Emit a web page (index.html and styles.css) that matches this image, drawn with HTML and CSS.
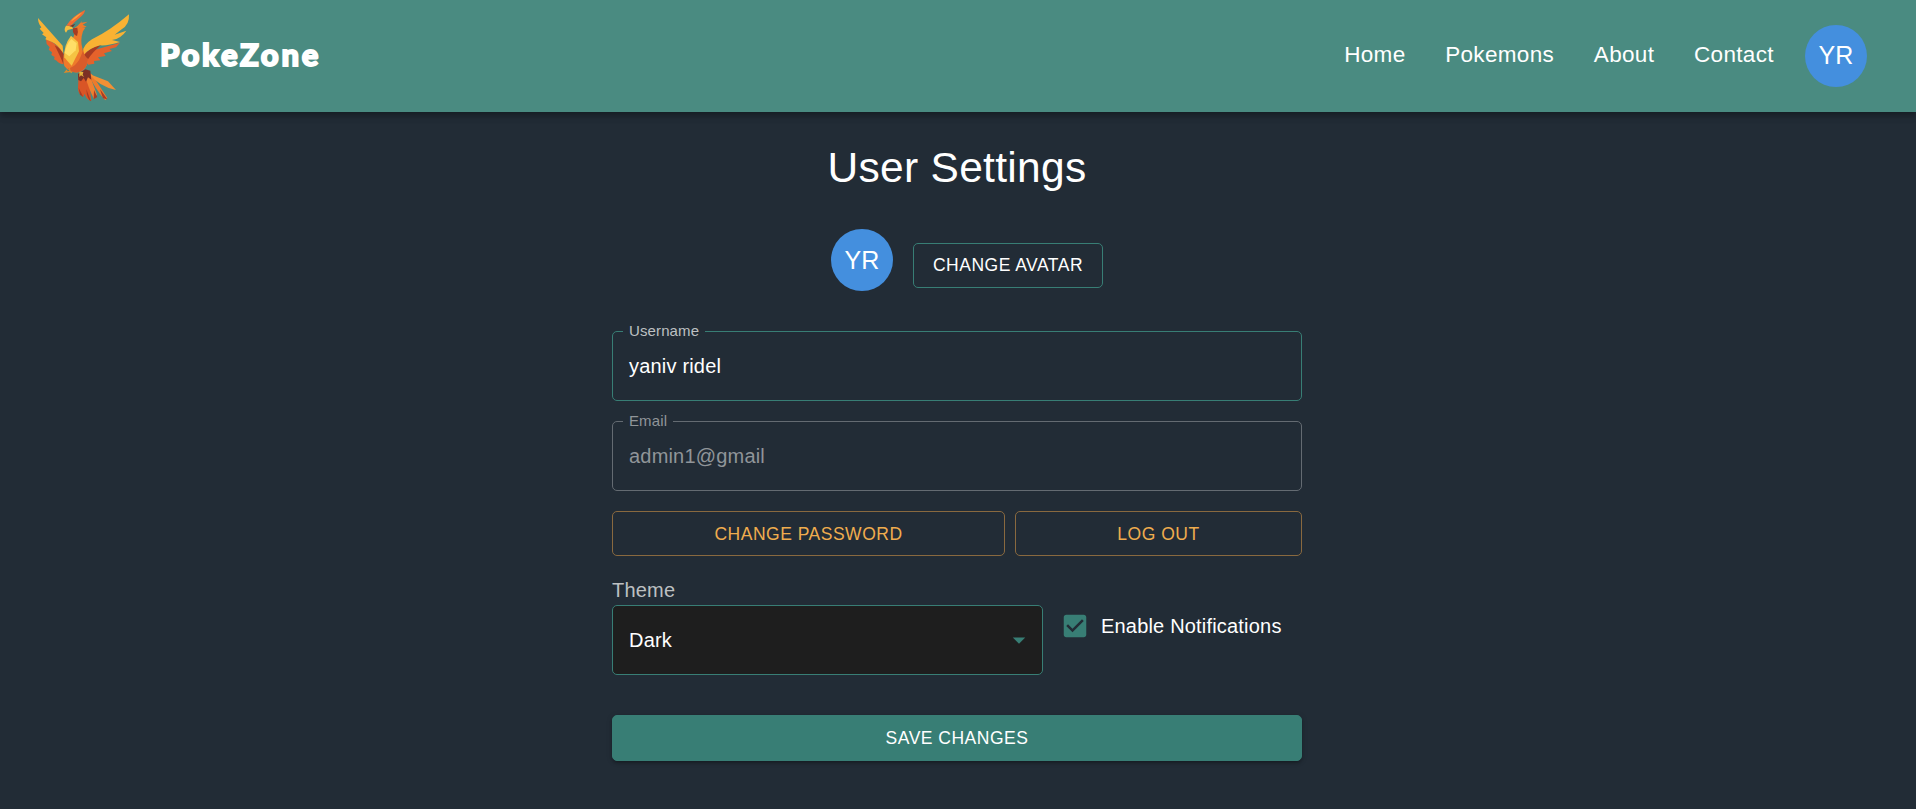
FILE: index.html
```html
<!DOCTYPE html>
<html lang="en">
<head>
<meta charset="utf-8">
<title>PokeZone</title>
<link rel="stylesheet" href="styles.css">
</head>
<body>
<header class="bar">
  <svg class="logo" viewBox="0 0 390 336" aria-hidden="true">
    <path fill="#e5622b" d="M78 118 L92 124 Q112 134 130 160 L131 193 Q118 192 110 182 L102 178 L104 171 L94 165 L96 157 L86 149 L89 142 L80 132Z"/>
    <path fill="#a83c22" d="M104 136 Q124 146 131 164 L130 192 Q122 172 104 136Z"/>
    <path fill="#f9b233" d="M54 54 L128 137 L130 160 Q112 132 96 126 L76 118 L79 112 L66 103 L71 99 L59 86 L64 82 Q54 70 54 54Z"/>
    <path fill="#e5622b" d="M188 160 L300 128 L288 142 L268 147 L276 153 L252 160 L257 168 L234 172 L241 181 L222 183 L223 191 L204 194Z"/>
    <path fill="#a83c22" d="M190 167 Q214 138 243 136 Q218 156 204 178Z"/>
    <path fill="#f9b233" d="M187 158 Q190 134 216 118 Q270 92 327 43 Q329 74 305 88 L284 104 L319 92 Q304 115 276 120 L300 126 Q262 138 240 136 Q208 144 187 168Z"/>
    <path fill="#d95526" d="M176 220 L204 220 L214 303 Q200 300 194 282 L189 291 Q174 282 174 264Z"/>
    <path fill="#f08030" d="M193 222 L207 220 L231 284 L222 297 Q206 266 193 222Z"/>
    <path fill="#ee7a2b" d="M203 218 L215 222 L262 294 L256 301 Q226 268 203 218Z"/>
    <path fill="#f29035" d="M208 222 L264 244 L288 270 Q238 260 208 222Z"/>
    <path fill="#7d3025" d="M174 222 L196 208 L211 212 L214 239 L204 232 L198 245 L191 234 L183 244 L175 240Z"/>
    <path fill="#a93b25" d="M176 264 L190 291 L180 284Z M199 268 L213 304 Q201 299 199 268Z M222 270 L232 291 L221 298 Z M240 268 L262 298 L249 295Z"/>
    <path fill="#ee7a2b" d="M172 78 L187 62 L184 68 L203 65 L188 74 L200 80 L187 84 L196 83 L189 94 Q180 121 187 144 Q188 166 204 178 Q202 207 180 216 Q151 222 133 198 Q122 165 150 126 Q170 105 160 86Z"/>
    <path fill="#d95c2b" d="M190 145 Q188 164 204 178 Q202 208 178 216 Q159 220 143 206 Q178 199 190 145Z"/>
    <path fill="#f5c343" d="M153 107 L174 126 L177 154 L155 197 Q142 184 133 172 Q130 137 153 107Z"/>
    <path fill="#ffde67" d="M154 117 L170 130 L167 151 L148 169 L134 159 Q138 134 154 117Z"/>
    <path fill="#a83c22" d="M159 85 L172 83 Q176 96 171 108 Q156 104 159 85Z"/>
    <path fill="#f5bd40" d="M138 77 L155 78 L159 86 L143 90 L138 98 Q130 90 138 77Z"/>
    <path fill="#f26b32" d="M139 77 Q157 48 195 30 Q194 43 178 54 Q166 64 153 77Z"/>
    <path fill="#f9a53c" d="M152 65 Q166 46 188 37 Q170 56 152 65Z"/>
    <path fill="#7d3025" d="M148 79 L166 71 L159 81Z"/>
    <path fill="none" stroke="#d98a2c" stroke-width="4" d="M148 204 L150 214 L136 216 L141 210 M150 214 L156 218"/>
    <path fill="#e3b13b" d="M178 215 L190 216 L188 224 L192 231 L183 226 L178 231Z"/>
  </svg>
  <span class="brand">PokeZone</span>
  <nav class="nav"><a>Home</a><a>Pokemons</a><a>About</a><a>Contact</a></nav>
  <div class="avatar">YR</div>
</header>
<main class="settings">
  <h1 class="title">User Settings</h1>
  <div class="avatar-row">
    <div class="avatar">YR</div>
    <button class="btn btn-avatar">CHANGE AVATAR</button>
  </div>
  <fieldset class="field"><legend>Username</legend><div class="value">yaniv ridel</div></fieldset>
  <fieldset class="field disabled"><legend>Email</legend><div class="value">admin1@gmail</div></fieldset>
  <div class="actions">
    <button class="btn btn-warn">CHANGE PASSWORD</button>
    <button class="btn btn-warn">LOG OUT</button>
  </div>
  <div class="prefs">
    <div class="theme">
      <div class="theme-label">Theme</div>
      <div class="select"><span>Dark</span>
        <svg class="arrow" viewBox="0 0 24 24"><path d="M7 10l5 5 5-5z"/></svg></div>
    </div>
    <div class="notify">
      <svg class="check" viewBox="0 0 24 24"><path d="M19 3H5c-1.11 0-2 .9-2 2v14c0 1.1.89 2 2 2h14c1.11 0 2-.9 2-2V5c0-1.1-.89-2-2-2zm-9 14l-5-5 1.41-1.41L10 14.17l7.59-7.59L19 8l-9 9z"/></svg>
      <span>Enable Notifications</span>
    </div>
  </div>
  <button class="btn btn-save">SAVE CHANGES</button>
</main>
</body>
</html>
```
FILE: styles.css
```css
* { box-sizing: border-box; }
html { height: 100%; overflow: hidden; }
body {
  margin: 0;
  height: 100%;
  background: #222c36;
  color: #fff;
  font-family: "Liberation Sans", Arial, sans-serif;
  font-size: 20px;
  letter-spacing: 0.19px;
}
.bar {
  display: flex;
  align-items: center;
  height: 112px;
  padding: 0 49px 0 20px;
  background: #4a8b81;
  box-shadow: 0 2px 5px -1px rgba(0,0,0,.2), 0 5px 6px rgba(0,0,0,.14), 0 1px 12px rgba(0,0,0,.12);
}
.logo { width: 130px; height: 112px; }
.brand {
  margin-left: 10px;
  padding-bottom: 4px;
  font: 900 31px/40px Lato, sans-serif;
  letter-spacing: 2.7px;
  -webkit-text-stroke: 1.8px #fff;
}
.nav {
  display: flex;
  gap: 39.7px;
  margin-left: auto;
  margin-right: 31.2px;
  padding-bottom: 2px;
  font-size: 22.5px;
  letter-spacing: 0.33px;
  line-height: 34px;
}
.avatar {
  display: flex;
  align-items: center;
  justify-content: center;
  width: 62px;
  height: 62px;
  border-radius: 50%;
  background: #448fde;
  font-size: 25px;
}
.bar .avatar { margin-bottom: 1px; }
.settings { width: 690px; margin: 0 auto 0 612px; }
.title {
  margin: 0;
  padding-top: 30px;
  font-size: 42.5px;
  font-weight: 400;
  line-height: 52px;
  letter-spacing: 0.31px;
  text-align: center;
}
.avatar-row {
  display: flex;
  gap: 20px;
  height: 129px;
  padding: 35px 0 0 219px;
}
.btn {
  display: block;
  height: 45px;
  padding: 0 0 1px;
  border: 1px solid #387e75;
  border-radius: 5px;
  background: none;
  color: #fff;
  font: 17.5px/22px "Liberation Sans", Arial, sans-serif;
  letter-spacing: 0.5px;
}
.btn-avatar { width: 190px; margin-top: 14px; }
.btn-warn { padding: 0; color: #f0ad4e; border-color: #89693f; }
.btn-save {
  width: 100%;
  height: 46px;
  margin-top: 40px;
  background: #387e75;
  box-shadow: 0 3px 3px -2px rgba(0,0,0,.2), 0 2px 3px rgba(0,0,0,.14), 0 1px 6px rgba(0,0,0,.12);
}
.field {
  height: 78px;
  margin: 0 0 12px;
  padding: 0 16px;
  border: 1px solid #387e75;
  border-radius: 5px;
}
.field legend {
  height: 17px;
  margin-left: -6px;
  padding: 0 6px;
  font-size: 15px;
  line-height: 15px;
  letter-spacing: 0.12px;
  color: #bdc0c2;
}
.field .value { padding-top: 14px; line-height: 24px; }
.field.disabled { border-color: #646b72; }
.field.disabled legend, .field.disabled .value { color: #909599; }
.actions {
  display: grid;
  grid-template-columns: 393px 287px;
  gap: 10px;
  margin-top: 20px;
}
.prefs { display: flex; gap: 17px; margin-top: 20px; }
.theme-label { height: 29px; line-height: 29px; color: #bdc0c2; }
.select {
  display: flex;
  align-items: center;
  justify-content: space-between;
  width: 431px;
  height: 70px;
  padding: 0 8px 0 16px;
  border: 1px solid #387e75;
  border-radius: 5px;
  background: #1e1e1e;
}
.arrow { width: 30px; height: 30px; fill: #387e75; }
.notify { display: flex; align-items: center; gap: 11px; height: 30px; margin-top: 35px; }
.check { width: 30px; height: 30px; fill: #387e75; }
```
